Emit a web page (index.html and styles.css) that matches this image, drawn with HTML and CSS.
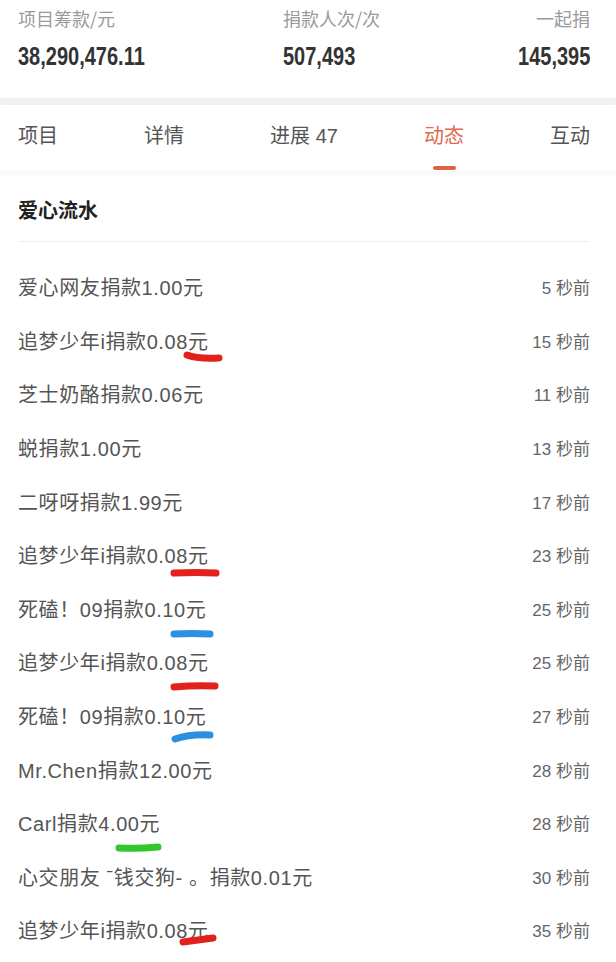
FILE: index.html
```html
<!DOCTYPE html>
<html lang="zh-CN">
<head>
<meta charset="utf-8">
<title>爱心流水</title>
<link rel="stylesheet" href="styles.css">
</head>
<body>
<div class="page">
  <section class="stats">
    <div class="stat">
      <div class="stat-label">项目筹款/元</div>
      <div class="stat-value"><span class="num">38,290,476.11</span></div>
    </div>
    <div class="stat">
      <div class="stat-label">捐款人次/次</div>
      <div class="stat-value"><span class="num">507,493</span></div>
    </div>
    <div class="stat stat-right">
      <div class="stat-label">一起捐</div>
      <div class="stat-value"><span class="num num-right">145,395</span></div>
    </div>
  </section>
  <div class="gap"></div>
  <nav class="tabs">
    <span class="tab">项目</span>
    <span class="tab">详情</span>
    <span class="tab">进展 47</span>
    <span class="tab tab-active">动态</span>
    <span class="tab">互动</span>
  </nav>
  <section class="feed">
    <h2 class="feed-title">爱心流水</h2>
    <ul class="feed-list">
      <li class="row"><span class="who">爱心网友捐款1.00元</span><span class="when">5 秒前</span></li>
      <li class="row"><span class="who">追梦少年i捐款0.08元</span><span class="when">15 秒前</span></li>
      <li class="row"><span class="who">芝士奶酪捐款0.06元</span><span class="when">11 秒前</span></li>
      <li class="row"><span class="who">蜕捐款1.00元</span><span class="when">13 秒前</span></li>
      <li class="row"><span class="who">二呀呀捐款1.99元</span><span class="when">17 秒前</span></li>
      <li class="row"><span class="who">追梦少年i捐款0.08元</span><span class="when">23 秒前</span></li>
      <li class="row"><span class="who">死磕！09捐款0.10元</span><span class="when">25 秒前</span></li>
      <li class="row"><span class="who">追梦少年i捐款0.08元</span><span class="when">25 秒前</span></li>
      <li class="row"><span class="who">死磕！09捐款0.10元</span><span class="when">27 秒前</span></li>
      <li class="row"><span class="who">Mr.Chen捐款12.00元</span><span class="when">28 秒前</span></li>
      <li class="row"><span class="who">Carl捐款4.00元</span><span class="when">28 秒前</span></li>
      <li class="row"><span class="who">心交朋友 ˉ钱交狗- 。捐款0.01元</span><span class="when">30 秒前</span></li>
      <li class="row"><span class="who">追梦少年i捐款0.08元</span><span class="when">35 秒前</span></li>
    </ul>
  </section>
  <svg class="marks" width="616" height="962" viewBox="0 0 616 962" aria-hidden="true">
    <path class="mk red" d="M187 355 Q 197 359 219 358"/>
    <path class="mk red" d="M174 573 Q 195 572 216 573"/>
    <path class="mk blue" d="M174 634 Q 192 633 210 634"/>
    <path class="mk red" d="M174 687 Q 195 685 215 686"/>
    <path class="mk blue" d="M175 739 Q 190 734 210 735"/>
    <path class="mk green" d="M119 848 Q 138 849 158 847"/>
    <path class="mk red" d="M183 942 Q 198 940 213 938"/>
  </svg>
</div>
</body>
</html>
```
FILE: styles.css
```css
html, body {
  margin: 0;
  padding: 0;
  background: #ffffff;
}
body {
  font-family: "Liberation Sans", "Noto Sans CJK SC", sans-serif;
  color: #555;
}
.page {
  position: relative;
  width: 616px;
  min-height: 962px;
  overflow: hidden;
}
.stats {
  display: grid;
  grid-template-columns: 265px 1fr auto;
  padding: 4px 26px 0 18px;
  height: 94px;
}
.stat-label {
  font-family: "Noto Sans CJK SC", sans-serif;
  font-size: 18px;
  line-height: 28px;
  color: #9a9a9a;
}
.stat-value {
  margin-top: 10px;
  font-family: "Liberation Sans", "DejaVu Sans", sans-serif;
  font-weight: 700;
  font-size: 25px;
  line-height: 28px;
  color: #333;
}
.num {
  display: inline-block;
  transform: scaleX(0.8);
  transform-origin: left center;
}
.num-right {
  transform-origin: right center;
}
.stat-right {
  text-align: right;
}
.gap {
  height: 7px;
  background: #f2f2f2;
}
.tabs {
  position: relative;
  display: flex;
  justify-content: space-between;
  align-items: flex-start;
  padding: 0 26px 0 18px;
  height: 66px;
  background: #fff;
  box-shadow: 0 2px 6px rgba(0, 0, 0, 0.05);
}
.tab {
  position: relative;
  margin-top: 17px;
  font-family: "Liberation Sans", "Noto Sans CJK SC", sans-serif;
  font-size: 20px;
  line-height: 28px;
  color: #555;
  white-space: nowrap;
}
.tab-active {
  color: #e0694c;
}
.tab-active::after {
  content: "";
  position: absolute;
  left: 50%;
  top: 44px;
  width: 23px;
  height: 4px;
  margin-left: -11px;
  border-radius: 2px;
  background: #de6245;
}
.feed {
  padding: 0 26px 0 18px;
}
.feed-title {
  margin: 0;
  padding-top: 25px;
  height: 45px;
  font-family: "Noto Sans CJK SC", sans-serif;
  font-size: 20px;
  line-height: 28px;
  font-weight: 700;
  color: #222;
  border-bottom: 1px solid #eeeeee;
}
.feed-list {
  list-style: none;
  margin: 0;
  padding: 18px 0 0 0;
}
.row {
  display: flex;
  justify-content: space-between;
  align-items: center;
  height: 53.6px;
}
.who {
  font-size: 20px;
  letter-spacing: 0.6px;
  color: #555;
  white-space: nowrap;
}
.when {
  font-size: 17px;
  color: #666;
  white-space: nowrap;
}
.marks {
  position: absolute;
  left: 0;
  top: 0;
  pointer-events: none;
}
.mk {
  fill: none;
  stroke-linecap: round;
  stroke-width: 7;
}
.red { stroke: #e2201c; }
.blue { stroke: #2b8fe2; }
.green { stroke: #33c72e; }
```
